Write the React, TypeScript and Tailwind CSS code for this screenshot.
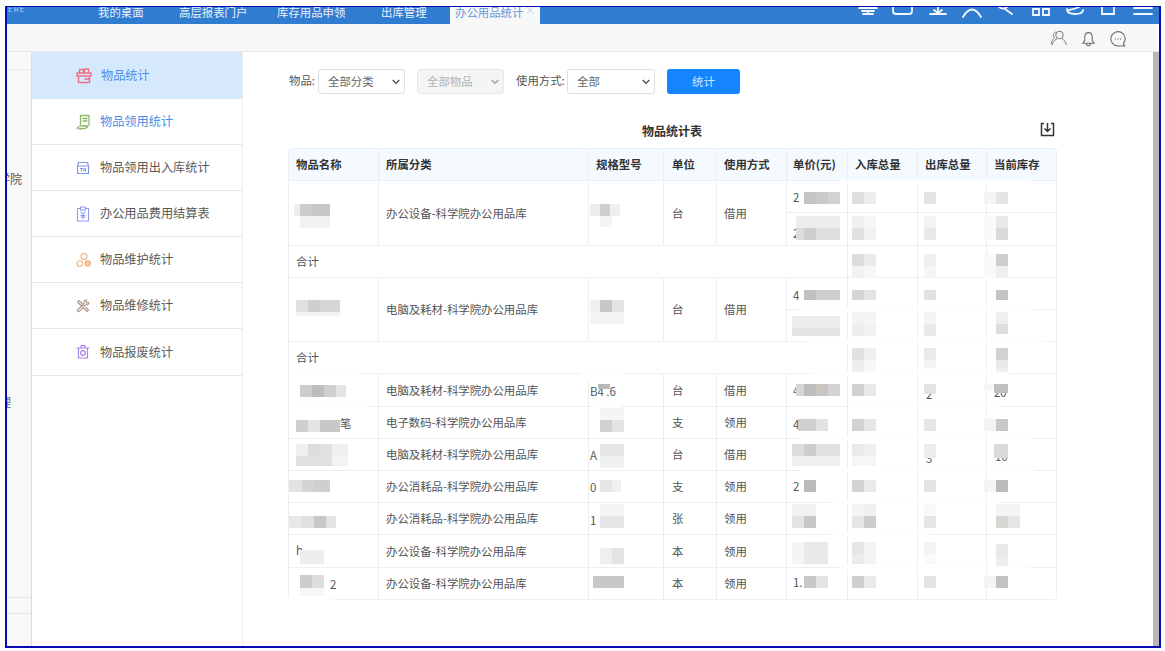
import React from "react";

type Tile = [number, number, number, number, string];

const tiles: Tile[] = [
  // rows 1-2
  [300,204,12,12,"#cdcdcd"],[312,204,18,12,"#c6c6c6"],[294,204,6,12,"#eeeeee"],[300,216,30,12,"#f2f2f2"],
  [590,204,10,12,"#ececec"],[600,204,10,12,"#cfcfcf"],[610,204,10,12,"#efefef"],[600,216,12,11,"#f3f3f3"],
  [804,192,12,12,"#c4c4c4"],[816,192,12,12,"#cbc9c9"],[828,192,12,12,"#d2d2d2"],
  [852,192,12,12,"#dedede"],[864,192,12,12,"#ececec"],[924,192,12,12,"#e3e3e3"],[984,192,12,12,"#f5f4f2"],[996,192,12,12,"#e3e4e5"],
  [796,216,44,12,"#ececec"],[796,228,8,12,"#dddddd"],[804,228,12,12,"#cfcfcf"],[816,228,24,12,"#dedede"],
  [852,216,12,12,"#f1eff0"],[864,216,12,12,"#f6f6f6"],[852,228,12,12,"#e2e2e2"],[864,228,12,12,"#f1f1f1"],
  [924,216,12,12,"#f3f3f3"],[924,228,12,12,"#e9e9e9"],[984,216,12,24,"#fafafa"],[996,216,12,12,"#e9e9e9"],[996,228,12,12,"#dadada"],
  // total 1
  [852,254,12,12,"#dcdcdc"],[864,254,12,12,"#ebebeb"],[852,266,12,12,"#f2f2f2"],[864,266,12,12,"#f7f7f7"],
  [924,254,12,12,"#efefef"],[924,266,12,12,"#f5f5f5"],[984,254,12,24,"#fafafa"],[996,254,12,12,"#cfcfcf"],[996,266,12,12,"#efefef"],
  // rows 4-5
  [296,300,12,12,"#e0e0e0"],[308,300,12,12,"#cfcfcf"],[320,300,20,12,"#d6d6d6"],[296,312,44,4,"#f3f3f3"],
  [590,300,10,12,"#f0f0f0"],[600,300,12,12,"#c8c8c8"],[612,300,12,12,"#e3e3e3"],[590,312,34,12,"#f5f5f5"],
  [804,290,12,10,"#c0c0c0"],[816,290,24,10,"#cfcfcf"],[852,290,12,10,"#d5d5d5"],[864,290,12,10,"#e3e3e3"],[924,290,12,10,"#e2e2e2"],[996,290,12,10,"#c4c4c4"],
  [792,316,48,12,"#ececec"],[792,328,48,8,"#e3e3e3"],
  [852,312,12,12,"#f3f3f3"],[864,312,12,12,"#f5f5f5"],[852,324,12,12,"#eeeeee"],[864,324,12,12,"#f1f1f1"],
  [924,312,12,12,"#f5f5f5"],[924,324,12,12,"#e9e9e9"],[996,312,12,12,"#efefef"],[996,324,12,10,"#dedede"],
  // total 2
  [852,348,12,12,"#e2e2e2"],[864,348,12,12,"#efefef"],[852,360,12,12,"#eeeeee"],[864,360,12,12,"#f7f7f7"],
  [924,348,12,12,"#ebebeb"],[924,360,12,8,"#f5f5f5"],[996,348,12,12,"#d2d2d2"],[996,360,12,8,"#e8e8e8"],[996,368,12,4,"#efefef"],
  // row 7
  [300,385,12,12,"#cdcdcd"],[312,385,12,12,"#bdbdbd"],[324,385,12,12,"#cfcfcf"],[336,385,10,12,"#e4e4e4"],
  [598,384,12,5,"#b8b8b8"],[804,384,12,12,"#bebebe"],[816,384,12,12,"#c9c6c2"],[828,384,12,12,"#d2d3d6"],[796,384,8,12,"#d6d6d6"],
  [852,384,12,12,"#d0d0d0"],[864,384,12,12,"#e8e8e8"],[924,384,12,10,"#e3e3e3"],[994,384,14,9,"#bfbfbf"],[984,384,10,6,"#f5f5f5"],
  // row 8
  [296,420,12,12,"#cfcfcf"],[308,420,12,12,"#e3e3e3"],[320,420,20,12,"#c8c8c8"],
  [600,420,12,12,"#d0d0d0"],[612,420,12,12,"#e3e3e3"],[600,408,24,12,"#f5f5f5"],
  [798,419,18,12,"#cfcfcf"],[816,419,12,12,"#e2e2e2"],[852,419,12,12,"#d3d1d2"],[864,419,12,12,"#e6e6e6"],
  [924,419,12,12,"#e6e6e6"],[984,419,12,12,"#f4f3f0"],[996,419,12,12,"#c8c8ca"],
  // row 9
  [296,444,12,12,"#f0f0f0"],[308,444,12,12,"#dddddd"],[320,444,12,12,"#e0e0e0"],[332,444,16,12,"#efefef"],[296,456,36,10,"#e0e0e0"],[332,456,16,10,"#f3f3f3"],
  [600,444,24,12,"#e6e6e6"],[600,456,24,12,"#f0f0f0"],
  [792,444,12,12,"#dddddd"],[804,444,12,12,"#cdcdcd"],[816,444,24,12,"#e0e0e0"],[792,456,48,10,"#efefef"],
  [852,444,12,12,"#ebebeb"],[864,444,12,12,"#f0f0f0"],[852,456,24,10,"#f6f6f6"],[924,444,12,14,"#ececec"],[994,444,14,14,"#dadada"],
  // row 10
  [289,480,13,12,"#e3e3e3"],[302,480,12,12,"#d4d4d4"],[314,480,16,12,"#cfcfcf"],
  [600,480,12,12,"#e6e6e6"],[612,480,9,12,"#f0f0f0"],[804,480,12,12,"#bbbbbb"],
  [852,480,12,12,"#d3d3d3"],[864,480,12,12,"#ebebeb"],[924,480,12,12,"#e3e3e3"],[984,480,12,12,"#f5f4f2"],[996,480,12,12,"#bcbcbc"],
  // row 11
  [289,516,13,12,"#e8e8e8"],[302,516,12,12,"#e0e0e0"],[314,516,12,12,"#c8c8c8"],[326,516,10,12,"#e3e3e3"],
  [600,504,24,12,"#f5f5f5"],[600,516,24,12,"#e6e6e6"],
  [792,504,24,12,"#f1f1f1"],[792,516,12,12,"#e3e3e3"],[804,516,12,12,"#c8c8c8"],
  [852,504,12,12,"#f5f5f5"],[864,504,12,12,"#f0f0f2"],[852,516,12,12,"#e6e6e6"],[864,516,12,12,"#cdcdcd"],
  [924,504,12,12,"#f9f9f9"],[924,516,12,12,"#e6e6e6"],[996,504,24,12,"#f5f5f5"],[996,516,12,12,"#d6d6d2"],[1008,516,12,12,"#e6e6e6"],
  // row 12
  [300,550,24,14,"#eeeeee"],[600,548,12,16,"#efefef"],[612,548,12,16,"#e3e3e3"],
  [792,542,12,22,"#f5f5f5"],[804,542,24,22,"#e8e9eb"],[852,542,12,12,"#e6e6e6"],[864,542,12,12,"#f3f3f3"],[852,554,12,10,"#ececec"],[864,554,12,10,"#f3f3f3"],
  [924,542,12,12,"#f3f3f3"],[924,554,12,10,"#fafafa"],[996,544,12,12,"#e8e9eb"],[996,556,12,10,"#ecedee"],
  // row 13
  [300,575,12,13,"#cccccc"],[312,575,12,13,"#dddddd"],[300,588,24,8,"#f6f6f6"],[593,576,31,12,"#c8c8c8"],
  [804,576,12,12,"#c8c8c8"],[816,576,12,12,"#e3e3e3"],[852,576,12,12,"#d0cfcf"],[864,576,12,12,"#eaeaea"],
  [924,576,12,12,"#e3e3e3"],[984,576,12,12,"#f5f4f2"],[996,576,12,12,"#c2c2c4"],
];

const smudges: [number, number, number, number][] = [
  [840,180,190,4],[800,307,235,5],[805,339,240,5],[810,371,200,6],[850,404,150,5],[800,436,230,5],
  [800,468,235,5],[830,500,170,4],[830,532,100,4],[840,565,190,5],[289,371,70,10],[580,371,45,10],
  [289,404,80,5],[590,404,30,5],[289,596,45,5],
];

const texts: [number, number, string][] = [
  [793,190,"2"],[793,226,"2"],[793,288,"4"],[793,383,"4"],[793,417,"4"],[793,479,"2"],[793,575,"1."],
  [340,416,"笔"],[330,577,"2"],[590,384,"B4 .6"],[590,448,"A"],[590,480,"0"],[590,513,"1"],[296,543,"h"],
  [994,385,"20"],[926,387,"2"],[995,449,"10"],[926,451,"3"],
];

const cols = [90, 210, 75, 53, 70, 61, 70, 69, 70];
const pads = ["pl-[7px]", "pl-[7px]", "pl-[7px]", "pl-[8px]", "pl-[7px]", "pl-[6px]", "pl-[7px]", "pl-[7px]", "pl-[7px]"];
const head = ["物品名称","所属分类","规格型号","单位","使用方式","单价(元)","入库总量","出库总量","当前库存"];
const cell = "border-r border-b border-[#ebeef5] pt-[1px] text-left font-normal";
const td = (i: number) => `${cell} ${pads[i]}`;

const E = () => (
  <>
    <td className={td(6)}></td><td className={td(7)}></td><td className={td(8)}></td>
  </>
);

function Single({ c, u, m, h }: { c: string; u: string; m: string; h: string }) {
  return (
    <tr className={h}>
      <td className={td(0)}></td>
      <td className={td(1)}>{c}</td>
      <td className={td(2)}></td>
      <td className={td(3)}>{u}</td>
      <td className={td(4)}>{m}</td>
      <td className={td(5)}></td>
      <E />
    </tr>
  );
}

function Merged({ c, h2 }: { c: string; h2: string }) {
  return (
    <>
      <tr className="h-[32px]">
        <td rowSpan={2} className={td(0)}></td>
        <td rowSpan={2} className={td(1)}>{c}</td>
        <td rowSpan={2} className={td(2)}></td>
        <td rowSpan={2} className={td(3)}>台</td>
        <td rowSpan={2} className={td(4)}>借用</td>
        <td className={td(5)}></td>
        <E />
      </tr>
      <tr className={h2}>
        <td className={td(5)}></td>
        <E />
      </tr>
    </>
  );
}

function Total() {
  return (
    <tr className="h-[32px]">
      <td colSpan={6} className={td(0)}>合计</td>
      <E />
    </tr>
  );
}

const menu = [
  { t: "物品统计", x: "pl-[69px]", c: "text-[#4a90e8]", h: "h-[47px] bg-[#d6e8fb]" },
  { t: "物品领用统计", x: "pl-[68px]", c: "text-[#4a90e8]", h: "h-[46px] border-b border-[#e8e8e8]" },
  { t: "物品领用出入库统计", x: "pl-[68px]", c: "text-[#5a5a5a]", h: "h-[46px] border-b border-[#e8e8e8]" },
  { t: "办公用品费用结算表", x: "pl-[68px]", c: "text-[#5a5a5a]", h: "h-[46px] border-b border-[#e8e8e8]" },
  { t: "物品维护统计", x: "pl-[68px]", c: "text-[#5a5a5a]", h: "h-[46px] border-b border-[#e8e8e8]" },
  { t: "物品维修统计", x: "pl-[68px]", c: "text-[#5a5a5a]", h: "h-[46px] border-b border-[#e8e8e8]" },
  { t: "物品报废统计", x: "pl-[68px]", c: "text-[#5a5a5a]", h: "h-[47px] border-b border-[#e8e8e8]" },
];

function MenuIcon({ i }: { i: number }) {
  const p = { fill: "none", strokeWidth: 1.1, strokeLinecap: "round" as const, strokeLinejoin: "round" as const };
  const box = "absolute left-[44px] top-1/2 -translate-y-1/2";
  if (i === 0)
    return (
      <svg className={box} width="16" height="16" viewBox="0 0 16 16" {...p} stroke="#ee6f84" strokeWidth={1.4}>
        <path d="M2.5 8V14.5H13.5V8M1 5H15V8H1ZM3.5 5V1.5H7.5V5M8.5 5V1H12.5V5M9 11H13.5" />
      </svg>
    );
  if (i === 1)
    return (
      <svg className={box} width="16" height="16" viewBox="0 0 16 16" {...p} stroke="#8cb863" strokeWidth={1.3}>
        <path d="M4.5 10.5V1.5H13V11M7 4.5H11M7 7H11M1 14.5C3 12 4.5 11.5 6 12H12C11 14 9 15 6 14.5L3 15" />
      </svg>
    );
  if (i === 2)
    return (
      <svg className={box} width="14" height="14" viewBox="0 0 14 14" {...p} stroke="#7e93ee">
        <path d="M2.5 1.5H11.5L12.5 5V12.5H1.5V5ZM1.5 5H12.5M4.5 7.5H6.5M5.5 7.5V10M8 7.5V10M9.5 7.5V10" />
      </svg>
    );
  if (i === 3)
    return (
      <svg className={box} width="14" height="16" viewBox="0 0 14 16" {...p} stroke="#8f9bf0">
        <path d="M4 2.5H1.5V15H12.5V2.5H10M4.5 1H9.5V4H4.5ZM5 6L7 8.5L9 6M7 8.5V12.5M5 9.5H9M5 11H9" />
      </svg>
    );
  if (i === 4)
    return (
      <svg className={box} width="16" height="16" viewBox="0 0 16 16" {...p} stroke="#f3b27c">
        <circle cx="8" cy="4.5" r="3" />
        <circle cx="3.8" cy="11.5" r="2.8" />
        <circle cx="11.8" cy="11.5" r="2.6" fill="#f9cda8" />
      </svg>
    );
  if (i === 5)
    return (
      <svg className={box} width="14" height="14" viewBox="0 0 14 14" {...p} stroke="#b09a8e" strokeWidth={1.1}>
        <path d="M1.5 3L3 1.5L12.5 11L11 12.5ZM12.8 3.2L10.8 4.2L9.8 3.2L10.8 1.2C9 .8 7.8 2 8.2 4.2L1.5 11C.8 12 2 13.2 3 12.5L9.8 5.8C11.8 6.2 13.2 5 12.8 3.2Z" />
      </svg>
    );
  return (
    <svg className={box} width="14" height="15" viewBox="0 0 14 15" {...p} stroke="#a685ea" strokeWidth={1.2}>
      <path d="M1 3.5H13M5 3.5V1.2H9V3.5M2.5 3.5V13.5H11.5V3.5" />
      <circle cx="7" cy="8.5" r="2.4" />
    </svg>
  );
}

const Chevron = ({ s }: { s: string }) => (
  <svg className="absolute right-[4px] top-[9px]" width="8" height="6" viewBox="0 0 8 6" fill="none" stroke={s} strokeWidth="1.2"><path d="M.7 1L4 4.5L7.3 1" /></svg>
);

export default function App() {
  const font = { fontFamily: '"Noto Sans CJK SC", "Noto Sans", "Liberation Sans", sans-serif' };
  return (
    <div className="relative w-[1165px] h-[651px] overflow-hidden bg-white text-[11.4px] text-[#555]" style={font}>
      <div className="absolute left-[5px] top-[6px] w-[1156px] h-[642px] border-l-2 border-r-2 border-t border-b-2 border-[#0a0ab4] flex flex-col overflow-hidden">
        {/* top bar */}
        <div className="relative h-[17px] shrink-0 bg-[#2f7cd0] overflow-hidden text-[#e8f1fb]">
          <span className="absolute left-[1px] top-[-4px] text-[8px] tracking-[1px] opacity-70">ERE</span>
          <span className="absolute left-[91px] top-[-3px]">我的桌面</span>
          <span className="absolute left-[172px] top-[-3px]">高层报表门户</span>
          <span className="absolute left-[270px] top-[-3px]">库存用品申领</span>
          <span className="absolute left-[374px] top-[-3px]">出库管理</span>
          <div className="absolute left-[443px] top-0 w-[90px] h-[17px] bg-[#f7f7f7] text-[#6a9ad6]">
            <span className="absolute left-[5px] top-[-3px]">办公用品统计</span>
            <span className="absolute left-[75px] top-[-5px] text-[10px] text-[#c8d4e2]">×</span>
          </div>
          <svg className="absolute left-0 top-0" width="1153" height="17" fill="none" stroke="#f2f7fd" strokeWidth="1.8" strokeLinecap="round">
            <path d="M852 1H870M855 4H867M861 4V6M856 7H866" />
            <path d="M886 0V4Q886 7 889 7H902Q905 7 905 4V0" />
            <path d="M931 0V4M927 3L931 6L935 3M923 7H939" />
            <path d="M956 10Q965 -5 974 10" />
            <path d="M992 0Q996 3 1000 0M998 2L1005 7" />
            <path d="M1026 2H1032V8H1026ZM1036 2H1042V8H1036Z" />
            <path d="M1060 2Q1060 7 1068 7Q1076 7 1076 3M1062 3Q1068 2 1072 0" />
            <path d="M1095 0V7H1107V0" />
            <path d="M1127 1H1145M1127 7H1145" />
          </svg>
        </div>
        {/* toolbar */}
        <div className="relative h-[28px] shrink-0 bg-[#f7f7f7] border-b border-[#e6e6e6]">
          <svg className="absolute left-[1043px] top-[6px]" width="18" height="17" viewBox="0 0 18 17" fill="none" stroke="#6e6e6e" strokeWidth="0.9">
            <circle cx="9.5" cy="5" r="3.8" />
            <path d="M7 9C4 10 3 12 2 15M12 8.5C14 9.5 15.5 12 16.5 15M6 2C3.5 2.5 2.5 6 4.5 8C2.5 9.5 1.5 11.5 1 14" />
          </svg>
          <svg className="absolute left-[1074px] top-[7px]" width="15" height="16" viewBox="0 0 14 15" fill="none" stroke="#6e6e6e" strokeWidth="1" strokeLinejoin="round">
            <path d="M7 1.5C4.5 1.5 3.5 3.5 3.5 6V9L1.5 11.5H12.5L10.5 9V6C10.5 3.5 9.5 1.5 7 1.5ZM5 11.5C5 14.5 9 14.5 9 11.5" />
          </svg>
          <svg className="absolute left-[1103px] top-[7px]" width="16" height="16" viewBox="0 0 15 15" fill="none" stroke="#6e6e6e" strokeWidth="1">
            <path d="M14 14L12.3 12A6.7 6.7 0 1 0 7.5 14H14Z" strokeLinejoin="round" />
            <path d="M4.8 7.5H5.6M7.2 7.5H8M9.6 7.5H10.4" strokeWidth="1.2" />
          </svg>
        </div>
        {/* body */}
        <div className="flex flex-1 min-h-0">
          <div className="relative w-[25px] shrink-0 bg-[#f8f8f8] border-r border-[#dddddd] overflow-hidden text-[12px]">
            <div className="absolute left-0 right-0 top-[17px] border-t border-[#ececec]" />
            <span className="absolute left-[-9px] top-[118px] whitespace-nowrap">学院</span>
            <span className="absolute left-[-8px] top-[341px] text-[#4a6fb0]">理</span>
            <div className="absolute left-0 right-0 top-[545px] border-t border-[#e6e6e6]" />
            <div className="absolute left-0 right-0 top-[561px] border-t border-[#e6e6e6]" />
          </div>
          <div className="w-[211px] shrink-0 bg-white border-r border-[#eeeeee] text-[12.2px]">
            {menu.map((m, k) => (
              <div key={m.t} className={`relative flex items-center ${m.x} ${m.c} ${m.h}`}>
                <MenuIcon i={k} />
                <span>{m.t}</span>
              </div>
            ))}
          </div>
          <div className="relative flex-1 min-w-0 bg-white">
            <div className="flex items-center h-[25px] mt-[17px] ml-[46px]">
              <span className="w-[29px] shrink-0 whitespace-nowrap -mt-[2px]">物品:</span>
              <div className="relative shrink-0 w-[87px] h-[25px] border border-[#dcdfe6] rounded-[3px] bg-white pl-[9px] leading-[23px] text-[#666]">
                全部分类
                <Chevron s="#444" />
              </div>
              <div className="relative shrink-0 ml-[12px] w-[87px] h-[25px] border border-[#e4e7ed] rounded-[3px] bg-[#f5f5f5] pl-[9px] leading-[23px] text-[#b3b3b3]">
                全部物品
                <Chevron s="#999" />
              </div>
              <span className="ml-[12px] w-[51px] shrink-0 whitespace-nowrap -mt-[2px]">使用方式:</span>
              <div className="relative shrink-0 w-[88px] h-[25px] border border-[#dcdfe6] rounded-[3px] bg-white pl-[9px] leading-[23px] text-[#666]">
                全部
                <Chevron s="#444" />
              </div>
              <div className="ml-[12px] shrink-0 w-[73px] h-[25px] rounded-[3px] bg-[#1585ff] text-[#cfe6ff] text-center leading-[25px]">统计</div>
            </div>
            <div className="absolute left-[45px] top-[70px] w-[768px] text-center font-bold text-[12px] text-[#333] leading-[18px]">物品统计表</div>
            <svg className="absolute left-[797px] top-[70px]" width="15" height="15" viewBox="0 0 15 15" fill="none" stroke="#333" strokeWidth="1.5">
              <path d="M4 1.5H1.5V13.5H13.5V1.5H11M7.5 1V9M4.5 6.5L7.5 9.5L10.5 6.5" />
            </svg>
            <div className="absolute left-[45px] top-[96px] w-[769px] rounded-[4px] overflow-hidden border-l border-t border-[#ebeef5]">
              <table className="w-[768px] table-fixed border-separate border-spacing-0 text-[11.4px] text-[#555]">
                <colgroup>
                  {cols.map((w, i) => (
                    <col key={i} style={{ width: w }} />
                  ))}
                </colgroup>
                <thead>
                  <tr className="h-[32px] bg-[#f5faff]">
                    {head.map((h, i) => (
                      <th key={h} className={`${td(i)} font-bold! text-[#333]`}>{h}</th>
                    ))}
                  </tr>
                </thead>
                <tbody>
                  <Merged c="办公设备-科学院办公用品库" h2="h-[33px]" />
                  <Total />
                  <Merged c="电脑及耗材-科学院办公用品库" h2="h-[32px]" />
                  <Total />
                  <Single c="电脑及耗材-科学院办公用品库" u="台" m="借用" h="h-[33px]" />
                  <Single c="电子数码-科学院办公用品库" u="支" m="领用" h="h-[32px]" />
                  <Single c="电脑及耗材-科学院办公用品库" u="台" m="借用" h="h-[32px]" />
                  <Single c="办公消耗品-科学院办公用品库" u="支" m="领用" h="h-[32px]" />
                  <Single c="办公消耗品-科学院办公用品库" u="张" m="领用" h="h-[32px]" />
                  <Single c="办公设备-科学院办公用品库" u="本" m="领用" h="h-[33px]" />
                  <Single c="办公设备-科学院办公用品库" u="本" m="领用" h="h-[32px]" />
                </tbody>
              </table>
            </div>
          </div>
          <div className="w-[6px] shrink-0 bg-[#b8b8b8]" />
        </div>
      </div>
      {/* masked values of the reference */}
      {smudges.map((s, i) => (
        <div key={"s" + i} className="absolute bg-white/90" style={{ left: s[0], top: s[1], width: s[2], height: s[3] }} />
      ))}
      {texts.map((t, i) => (
        <span key={"t" + i} className="absolute leading-[14px] text-[#555]" style={{ left: t[0], top: t[1] }}>{t[2]}</span>
      ))}
      {tiles.map((t, i) => (
        <div key={i} className="absolute" style={{ left: t[0], top: t[1], width: t[2], height: t[3], background: t[4] }} />
      ))}
    </div>
  );
}
